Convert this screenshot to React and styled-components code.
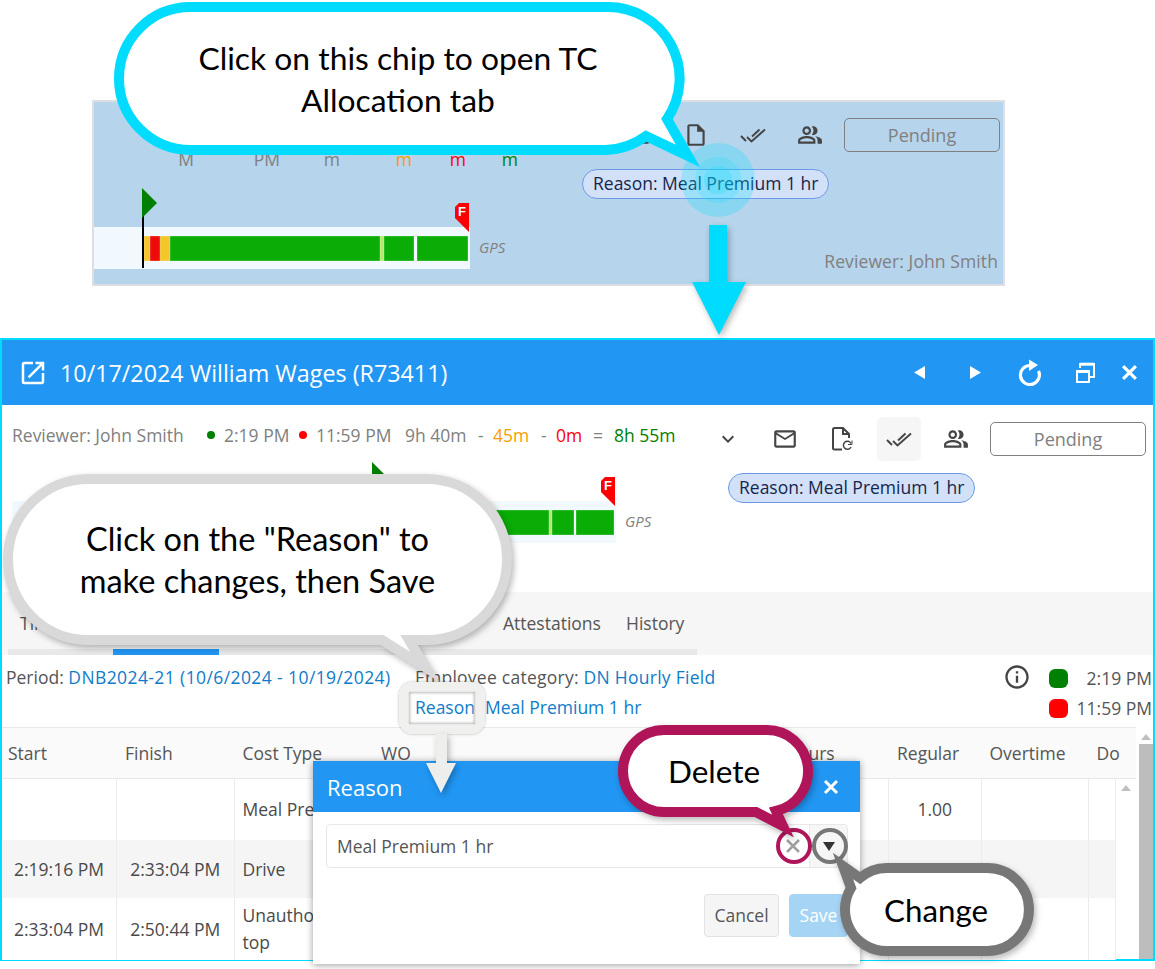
import React from "react";
import styled, { createGlobalStyle } from "styled-components";
import { MdOpenInNew, MdKeyboardArrowDown, MdInfoOutline, MdMailOutline, MdOutlineInsertDriveFile, MdOutlinePeopleAlt } from "react-icons/md";

const Global = createGlobalStyle`
  html, body { margin: 0; padding: 0; background: #fff; }
  * { box-sizing: border-box; }
`;

const Page = styled.div`
  position: relative; width: 1155px; height: 969px; overflow: hidden; background: #fff;
  padding-top: 100px; font-family: "Open Sans", "Noto Sans", sans-serif; font-size: 17.5px; color: #555;
`;

/* ---------- top strip ---------- */
const Strip = styled.section`
  display: flex; margin-left: 92px; width: 913px; height: 186px;
  border: 2px solid #dcdfe3; background: #b6d4ec;
`;
const StripLeft = styled.div`width: 466px; flex: none;`;
const StripStats = styled.div`
  display: grid; grid-template-columns: 100px 86px 60px 72px 54px 52px; margin-top: 45px; height: 24px; line-height: 24px;
`;
const StripStat = styled.span`text-align: right; color: ${p => p.$c || "#808080"}; white-space: nowrap;`;
const StripRight = styled.div`display: flex; flex-direction: column; align-items: flex-start; margin-top: 11px;`;
const StripReviewer = styled.div`align-self: flex-end; margin: 50px 2px 0 0; line-height: 24px; color: #808080; letter-spacing: 0.1px;`;

/* ---------- timeline ---------- */
const TimelineRow = styled.div`display: flex; margin-top: ${p => p.$mt}px;`;
const Track = styled.div`
  position: relative; display: flex; width: ${p => p.$w}px; height: 42px; padding: 9px 0 8px ${p => p.$start}px; background: #f1f8fe;
`;
const Seg = styled.i`
  display: block; height: 100%; flex: none; background: ${p => p.$c}; box-shadow: inset 0 0 1.5px rgba(255,255,255,.75);
`;
const Pole = styled.i`position: absolute; left: ${p => p.$x}px; top: -11px; width: 2px; height: 52px; background: #000;`;
const StartFlag = styled.svg`position: absolute; left: ${p => p.$x}px; top: -39px; width: 16px; height: 30px;`;
const EndFlag = styled.div`
  position: absolute; right: 1px; top: -24px; width: 14px; height: 29px;
  clip-path: polygon(0 4px, 4px 0, 100% 0, 100% 100%, 0 15px);
  background: #ff0000; color: #fff; font: 700 13px/17px "Liberation Sans", sans-serif; text-align: center;
`;
const Gps = styled.span`margin: 8px 0 0 9px; font-size: 15px; font-style: italic; line-height: 24px; color: #808080;`;

const segs = [["#f5c52c", 6], ["#ee0a0a", 10], ["#f5c52c", 10], ["#0aad05", 210], ["#b5e86f", 4], ["#0aad05", 30], ["#f1f8fe", 3], ["#0aad05", 51]];
const Timeline = ({ mt, w, start, scale }) => (
  <TimelineRow $mt={mt}>
    <Track $w={w} $start={start}>
      <Pole $x={start - 2} />
      <StartFlag $x={start - 2} viewBox="0 0 16 30"><path d="M0 0L15 15L0 30Z" fill="#008000" /></StartFlag>
      {segs.map(([c, n], i) => <Seg key={i} $c={c} style={{ width: n * scale }} />)}
      <EndFlag>F</EndFlag>
    </Track>
    <Gps>GPS</Gps>
  </TimelineRow>
);

/* ---------- action panel ---------- */
const Panel = styled.div`display: flex; flex-direction: column; flex: none;`;
const Toolbar = styled.div`display: flex; align-items: center; gap: 13px;`;
const Tool = styled.div`
  display: flex; align-items: center; justify-content: center; width: 44px; height: 44px; border-radius: 5px; color: #454545;
  background: ${p => (p.$on ? "#f6f6f6" : "transparent")};
`;
const Status = styled.div`
  width: 156px; height: 34px; border: 1px solid #808080; border-radius: 5px; margin-left: -1px; text-align: center;
  line-height: 33px; font-size: 18px; color: #808080;
`;
const Chip = styled.div`
  align-self: flex-start; height: 30px; margin: 12px 0 0 22px; padding: 0 10px; border: 1px solid #6d9ae8; border-radius: 15px;
  background: #d3e1f8; color: #15254d; line-height: 27px; white-space: nowrap;
`;
const DoubleCheck = () => (
  <svg width="26" height="16" viewBox="0 0 26 16" fill="none" stroke="#454545" strokeWidth="1.9">
    <path d="M1 9L6 14M7 10L11.5 14.5L25 2.5M12 9.5L19.5 2.5" />
  </svg>
);
const FileRefresh = () => (
  <svg width="22" height="24" viewBox="0 0 22 24" fill="none" stroke="#454545" strokeWidth="2">
    <path d="M11 22.5H3.5A1.5 1.5 0 0 1 2 21V2.5A1.5 1.5 0 0 1 3.5 1H12L18 7V11" />
    <path d="M12 1V7H18" />
    <path d="M20 16.5A4 4 0 1 0 20 20" strokeWidth="1.5" />
    <path d="M21 13.5V17.5H17" strokeWidth="1" />
  </svg>
);
const Actions = ({ doc }) => (
  <Panel>
    <Toolbar>
      <Tool><MdKeyboardArrowDown size={24} /></Tool>
      <Tool><MdMailOutline size={26} /></Tool>
      <Tool>{doc}</Tool>
      <Tool $on={doc.type === FileRefresh}><DoubleCheck /></Tool>
      <Tool><MdOutlinePeopleAlt size={26} /></Tool>
      <Status>Pending</Status>
    </Toolbar>
    <Chip>Reason: Meal Premium 1 hr</Chip>
  </Panel>
);

/* ---------- modal ---------- */
const Modal = styled.section`
  display: flex; flex-direction: column; margin-top: 52px; height: 623px; border: 2px solid #00dcff; background: #fff;
`;
const ModalHeader = styled.header`
  display: flex; align-items: center; flex: none; height: 65px; padding: 0 7px 0 16px; background: #2196f3; color: #fff;
`;
const Title = styled.h1`margin: 0 0 0 12px; flex: 1; font-size: 23.3px; font-weight: 400; white-space: nowrap;`;
const HeaderBtn = styled.span`display: flex; align-items: center; justify-content: center; width: ${p => p.$w}px; height: 30px; flex: none;`;

const Summary = styled.div`display: flex; justify-content: space-between; flex: none; height: 187px; padding: 12px 7px 0 10px;`;
const SummaryLeft = styled.div`display: flex; flex-direction: column;`;
const StatsLine = styled.div`display: flex; align-items: center; height: 24px; margin-top: 6px; line-height: 24px; white-space: nowrap;`;
const Stat = styled.span`
  display: flex; align-items: center; gap: 9px; flex: none; width: ${p => (p.$w ? p.$w + "px" : "auto")}; color: ${p => p.$c || "#808080"};
`;
const Dot = styled.i`width: 8px; height: 8px; border-radius: 50%; background: ${p => p.$c};`;

const TabBar = styled.nav`display: flex; flex: none; height: 63px; padding-left: 6px; background: #f6f6f6;`;
const Tab = styled.div`
  width: ${p => p.$w}px; padding: 19px 0 0 12px; line-height: 24px; color: #555; white-space: nowrap;
  border-bottom: 6px solid ${p => (p.$on ? "#2196f3" : "#e8e8e8")};
`;

const InfoArea = styled.div`display: flex; justify-content: space-between; flex: none; height: 72px; padding: 7px 1px 0 4px;`;
const InfoRows = styled.div`display: flex; flex-direction: column;`;
const InfoLine = styled.div`display: flex; height: 30px; align-items: center; white-space: nowrap; padding-left: ${p => p.$pl || 0}px;`;
const InfoCell = styled.span`flex: none; width: ${p => (p.$w ? p.$w + "px" : "auto")}; letter-spacing: ${p => p.$ls || 0}px;`;
const Link = styled.span`color: #0f7bc9; letter-spacing: ${p => p.$ls || 0}px;`;
const InfoRight = styled.div`display: flex; color: #555;`;
const InfoIcon = styled.div`display: flex; align-items: center; height: 30px; margin-right: 18px; color: #444;`;
const Legend = styled.div`display: flex; flex-direction: column; padding-top: 1px;`;
const LegendRow = styled.div`display: flex; align-items: center; justify-content: space-between; width: 103px; height: 30px;`;
const Square = styled.i`width: 19px; height: 19px; border-radius: 6px; background: ${p => p.$c};`;

const TableArea = styled.div`display: flex; flex: 1; min-height: 0;`;
const TableMain = styled.div`width: 1134px; flex: none; display: flex; flex-direction: column;`;
const HeadRow = styled.div`
  display: grid; grid-template-columns: 115px 117.5px 138.5px 404px 112px 92.5px 107px 48px; height: 52px; flex: none;
  border-top: 1px solid #e8e8e8; border-bottom: 1px solid #e8e8e8; background: #fafafa;
`;
const HeadCell = styled.div`
  padding: 0 8px; line-height: 50px; color: #555; white-space: nowrap;
  &:first-child { padding-left: 6px; }
`;
const BodyWrap = styled.div`display: flex; flex: 1;`;
const BodyRows = styled.div`flex: 1; display: flex; flex-direction: column;`;
const BodyRow = styled.div`
  display: grid; grid-template-columns: 115px 117.5px 138.5px 404px 112px 92.5px 107px 27px; height: ${p => p.$h}px; flex: none;
  background: ${p => (p.$alt ? "#f5f5f5" : "#fff")};
`;
const Cell = styled.div`
  display: flex; align-items: center; justify-content: ${p => (p.$center ? "center" : "flex-start")};
  padding: 0 8px; line-height: 27px; white-space: nowrap; border-right: 1px solid #ececec; color: #4a4a4a;
`;
const InnerScroll = styled.div`display: flex; justify-content: center; width: 21px; padding-top: 6px;`;
const ScrollUp = styled.i`
  display: block; width: 0; height: 0; border-left: 5px solid transparent; border-right: 5px solid transparent; border-bottom: 6px solid #c0c0c0;
`;
const OuterScroll = styled.div`display: flex; flex-direction: column; align-items: center; width: 17px; padding: 7px 0 0 3px;`;
const ScrollThumb = styled.div`flex: 1; width: 14px; margin-top: 4px; background: #bdbdbd;`;

/* ---------- overlays ---------- */
const Dialog = styled.div`
  position: absolute; left: 313px; top: 761px; width: 547px; height: 203px; background: #fff; box-shadow: 0 1px 7px rgba(0,0,0,.4); display: flex; flex-direction: column;
`;
const DialogHead = styled.div`
  display: flex; align-items: center; justify-content: space-between; height: 51px; padding: 0 21px 0 14px; background: #2196f3; color: #fff; font-size: 22px;
`;
const DialogBody = styled.div`padding: 12px 12px 0 13px;`;
const Select = styled.div`display: flex; align-items: center; height: 44px; border: 1px solid #e8e8e8; border-radius: 4px; color: #555;`;
const SelectText = styled.span`flex: 1; padding-left: 10px;`;
const ClearIcon = styled.span`display: flex; margin-right: 8px;`;
const DropBtn = styled.span`
  display: flex; align-items: center; justify-content: center; width: 38px; height: 100%; background: #f6f6f6; border-left: 1px solid #e8e8e8; border-radius: 0 4px 4px 0;
`;
const DropTri = styled.i`width: 0; height: 0; border-left: 6px solid transparent; border-right: 6px solid transparent; border-top: 9px solid #333;`;
const Buttons = styled.div`display: flex; justify-content: flex-end; gap: 10px; margin-top: 26px;`;
const Btn = styled.div`
  width: ${p => p.$w}px; height: 43px; border-radius: 4px; text-align: center; line-height: 41px;
  border: 1px solid ${p => (p.$primary ? "#a6d4f5" : "#e2e2e2")}; background: ${p => (p.$primary ? "#a6d4f5" : "#f5f5f5")}; color: ${p => (p.$primary ? "#fff" : "#555")};
`;

const Ripple = styled.div`
  position: absolute; left: 681px; top: 143px; width: 74px; height: 74px; border-radius: 50%;
  background: radial-gradient(circle, rgba(0,220,255,.5) 0 14px, rgba(0,220,255,.38) 14.5px 23px, rgba(0,220,255,.25) 23.5px 37px);
`;
const Shape = styled.svg`
  position: absolute; left: 0; top: 0; width: 1155px; height: 969px; pointer-events: none; overflow: visible;
  filter: ${p => p.$shadow ? "drop-shadow(2px 3px 3px rgba(0,0,0,.28))" : "none"};
`;
const Bubble = styled.div`
  position: absolute; display: flex; align-items: center; justify-content: center; text-align: center; color: #000;
  left: ${p => p.$x}px; top: ${p => p.$y}px; width: ${p => p.$w}px; height: ${p => p.$h}px;
  font-family: Lato, "Open Sans", sans-serif; font-size: ${p => p.$fs}px; line-height: 42px;
`;
const HighlightBox = styled.div`
  position: absolute; left: 399px; top: 682px; width: 86px; height: 52px; border: 10px solid #f0f0ee; border-radius: 14px;
  box-shadow: 0 0 3px rgba(0,0,0,.3);
`;
const HighlightInner = styled.div`width: 100%; height: 100%; box-shadow: inset 0 0 3px 1px #bbb, 0 0 1px #bbb;`;
const Ring = styled.div`
  position: absolute; left: ${p => p.$x}px; top: 828px; width: 36px; height: 36px; border-radius: 50%; border: 4px solid ${p => p.$c};
`;

const XIcon = ({ s, c, w }) => (
  <svg width={s} height={s} viewBox="0 0 16 16" fill="none" stroke={c} strokeWidth={w}><path d="M2 2L14 14M14 2L2 14" /></svg>
);

export default function App() {
  return (
    <Page>
      <Global />
      <Strip>
        <StripLeft>
          <StripStats>
            <StripStat>M</StripStat>
            <StripStat>PM</StripStat>
            <StripStat>m</StripStat>
            <StripStat $c="#f59e00">m</StripStat>
            <StripStat $c="#ff0000">m</StripStat>
            <StripStat $c="#008000">m</StripStat>
          </StripStats>
          <Timeline mt={56} w={376} start={50} scale={1} />
        </StripLeft>
        <StripRight>
          <Actions doc={<MdOutlineInsertDriveFile size={26} />} />
          <StripReviewer>Reviewer: John Smith</StripReviewer>
        </StripRight>
      </Strip>

      <Modal>
        <ModalHeader>
          <MdOpenInNew size={30} />
          <Title>10/17/2024 William Wages (R73411)</Title>
          <HeaderBtn $w={55}>
            <svg width="12" height="13" viewBox="0 0 12 13"><path d="M11 0V13L0 6.5Z" fill="#fff" /></svg>
          </HeaderBtn>
          <HeaderBtn $w={55}>
            <svg width="12" height="13" viewBox="0 0 12 13"><path d="M1 0V13L12 6.5Z" fill="#fff" /></svg>
          </HeaderBtn>
          <HeaderBtn $w={56}>
            <svg width="26" height="27" viewBox="0 0 26 27" fill="none">
              <path d="M13 6.5A9.5 9.5 0 1 0 21.5 12" stroke="#fff" strokeWidth="3.2" />
              <path d="M12 0.5L21 6L12 12Z" fill="#fff" />
            </svg>
          </HeaderBtn>
          <HeaderBtn $w={54}>
            <svg width="20" height="22" viewBox="0 0 20 22" fill="none" stroke="#fff">
              <path d="M5 6V2H19V15H15" strokeWidth="2" />
              <path d="M2 9H14V20H2Z" strokeWidth="2" />
              <path d="M1 9.5H15" strokeWidth="3" />
              <path d="M5 2.2H19" strokeWidth="3" />
            </svg>
          </HeaderBtn>
          <HeaderBtn $w={34}><XIcon s={17} c="#fff" w={3} /></HeaderBtn>
        </ModalHeader>

        <Summary>
          <SummaryLeft>
            <StatsLine>
              <Stat $w={195}>Reviewer: John Smith</Stat>
              <Stat $w={92}><Dot $c="#008000" />2:19 PM</Stat>
              <Stat $w={106}><Dot $c="#ff0000" />11:59 PM</Stat>
              <Stat $w={73}>9h 40m</Stat>
              <Stat $w={15}>-</Stat>
              <Stat $w={48} $c="#f59e00">45m</Stat>
              <Stat $w={15}>-</Stat>
              <Stat $w={37} $c="#ff0000">0m</Stat>
              <Stat $w={21}>=</Stat>
              <Stat $c="#008000">8h 55m</Stat>
            </StatsLine>
            <Timeline mt={54} w={604} start={362} scale={0.74} />
          </SummaryLeft>
          <Actions doc={<FileRefresh />} />
        </Summary>

        <TabBar>
          <Tab $w={105}>Time Entries</Tab>
          <Tab $w={106} $on>TC Allocation</Tab>
          <Tab $w={136}>Exceptions</Tab>
          <Tab $w={136}>Notes</Tab>
          <Tab $w={123}>Attestations</Tab>
          <Tab $w={83}>History</Tab>
        </TabBar>

        <InfoArea>
          <InfoRows>
            <InfoLine>
              <InfoCell $w={409}>Period: <Link $ls={0.4}>DNB2024-21 (10/6/2024 - 10/19/2024)</Link></InfoCell>
              <InfoCell $ls={0.25}>Employee category: <Link $ls={0.27}>DN Hourly Field</Link></InfoCell>
            </InfoLine>
            <InfoLine $pl={409}>
              <InfoCell $w={70}><Link>Reason</Link></InfoCell>
              <InfoCell><Link>Meal Premium 1 hr</Link></InfoCell>
            </InfoLine>
          </InfoRows>
          <InfoRight>
            <InfoIcon><MdInfoOutline size={28} /></InfoIcon>
            <Legend>
              <LegendRow><Square $c="#008000" />2:19 PM</LegendRow>
              <LegendRow><Square $c="#ff0000" />11:59 PM</LegendRow>
            </Legend>
          </InfoRight>
        </InfoArea>

        <TableArea>
          <TableMain>
            <HeadRow>
              <HeadCell>Start</HeadCell>
              <HeadCell>Finish</HeadCell>
              <HeadCell>Cost Type</HeadCell>
              <HeadCell>WO</HeadCell>
              <HeadCell>Hours</HeadCell>
              <HeadCell>Regular</HeadCell>
              <HeadCell>Overtime</HeadCell>
              <HeadCell>Do</HeadCell>
            </HeadRow>
            <BodyWrap>
              <BodyRows>
                <BodyRow $h={61}>
                  <Cell /><Cell /><Cell>Meal Premium 1 hr</Cell><Cell /><Cell /><Cell $center>1.00</Cell><Cell /><Cell />
                </BodyRow>
                <BodyRow $h={58} $alt>
                  <Cell $center>2:19:16 PM</Cell><Cell $center>2:33:04 PM</Cell><Cell>Drive</Cell><Cell /><Cell /><Cell /><Cell /><Cell />
                </BodyRow>
                <BodyRow $h={62}>
                  <Cell $center>2:33:04 PM</Cell><Cell $center>2:50:44 PM</Cell><Cell>Unauthorized<br />top</Cell><Cell /><Cell /><Cell /><Cell /><Cell />
                </BodyRow>
              </BodyRows>
              <InnerScroll><ScrollUp /></InnerScroll>
            </BodyWrap>
          </TableMain>
          <OuterScroll><ScrollUp /><ScrollThumb /></OuterScroll>
        </TableArea>
      </Modal>

      <Dialog>
        <DialogHead>Reason<XIcon s={16} c="#fff" w={3} /></DialogHead>
        <DialogBody>
          <Select>
            <SelectText>Meal Premium 1 hr</SelectText>
            <ClearIcon><XIcon s={16} c="#a0a0a0" w={2.5} /></ClearIcon>
            <DropBtn><DropTri /></DropBtn>
          </Select>
          <Buttons>
            <Btn $w={75}>Cancel</Btn>
            <Btn $w={59} $primary>Save</Btn>
          </Buttons>
        </DialogBody>
      </Dialog>

      <Ripple />

      <Shape viewBox="0 0 1155 969" $shadow>
        <path d="M709 225H727V282H746L719 335L692 282H709Z" fill="#00dcff" />
      </Shape>
      <Shape viewBox="0 0 1155 969">
        <path d="M190.5 7H605.5A71.5 71.5 0 0 1 667 119L688 156L646 136A71.5 71.5 0 0 1 605.5 150H190.5A71.5 71.5 0 0 1 190.5 7Z" fill="#fff" stroke="#00dcff" strokeWidth="10" strokeMiterlimit="10" />
      </Shape>
      <Bubble $x={119} $y={7} $w={558} $h={143} $fs={31.8}>Click on this chip to open TC<br />Allocation tab</Bubble>

      <Shape viewBox="0 0 1155 969" $shadow>
        <path d="M88.5 479H426.5A80.5 80.5 0 0 1 426.5 640H409L425 667L382 640H88.5A80.5 80.5 0 0 1 88.5 479Z" fill="#fff" stroke="#d9d9d9" strokeWidth="10" strokeMiterlimit="10" />
      </Shape>
      <Bubble $x={8} $y={479} $w={499} $h={161} $fs={32.5}>Click on the "Reason" to<br />make changes, then Save</Bubble>

      <HighlightBox><HighlightInner /></HighlightBox>
      <Shape viewBox="0 0 1155 969" $shadow>
        <path d="M436 734H447V763H456L441 793L426 763H436Z" fill="#eeeeec" />
      </Shape>

      <Ring $x={775.5} $c="#b0155a" />
      <Ring $x={812} $c="#777777" />

      <Shape viewBox="0 0 1155 969" $shadow>
        <path d="M664 730H766A41 41 0 0 1 776 811L783 826L756 812H664A41 41 0 0 1 664 730Z" fill="#fff" stroke="#b0155a" strokeWidth="10" strokeMiterlimit="10" />
      </Shape>
      <Bubble $x={622} $y={730} $w={184} $h={82} $fs={31.5}>Delete</Bubble>

      <Shape viewBox="0 0 1155 969" $shadow>
        <path d="M886.5 868H987.5A41.5 41.5 0 0 1 987.5 951H886.5A41.5 41.5 0 0 1 851 888L843 866L860 878A41.5 41.5 0 0 1 886.5 868Z" fill="#fff" stroke="#777777" strokeWidth="10" strokeMiterlimit="10" />
      </Shape>
      <Bubble $x={844} $y={868} $w={184} $h={83} $fs={31.3}>Change</Bubble>
    </Page>
  );
}
